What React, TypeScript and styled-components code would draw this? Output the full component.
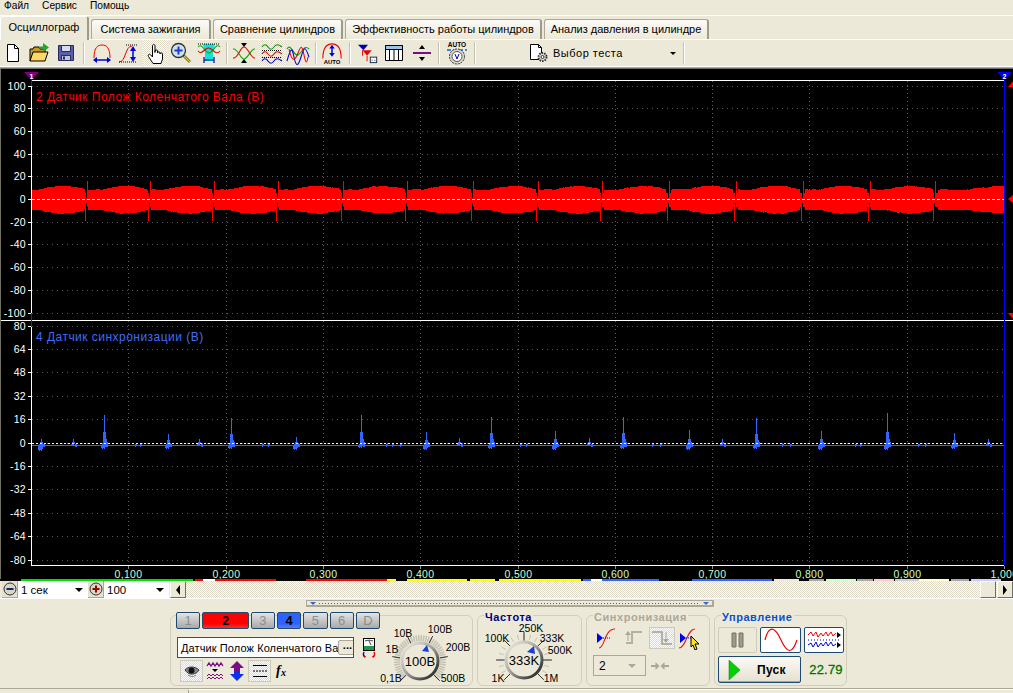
import React from "react";
import styled, { createGlobalStyle, css } from "styled-components";

const Global = createGlobalStyle`
  html, body { margin: 0; padding: 0; background: #ece9d8; overflow: hidden; }
  body { font-family: "Liberation Sans", Arial, sans-serif; font-size: 11px; color: #000; }
  svg { display: block; }
`;

const hatch = css`
  background-color: #fff;
  background-image: conic-gradient(#ddd9c6 25%, #fff 0 50%, #ddd9c6 0 75%, #fff 0);
  background-size: 2px 2px;
`;

const Page = styled.div`
  width: 1013px; height: 693px; display: flex; flex-direction: column; overflow: hidden; background: #ece9d8;
`;
const MenuBar = styled.div`
  height: 15px; display: flex; padding-left: 4px; gap: 13px; line-height: 12px; font-size: 10.2px;
`;
const TabBar = styled.div`
  height: 25px; box-sizing: border-box; border-top: 1px solid #fff; display: flex; align-items: flex-end; gap: 2px;
  position: relative; box-shadow: inset 0 -1px 0 #fff;
`;
const Tab = styled.div<{ $active?: boolean; $w: number }>`
  width: ${p => p.$w}px; box-sizing: border-box; text-align: center; font-size: 11px;
  border: 1px solid #aca899; border-bottom: none; border-radius: 3px 3px 0 0; white-space: nowrap;
  background: linear-gradient(#fbfaf6, #ece9d8);
  border-right: 2px solid #9d9a89;
  height: ${p => (p.$active ? 24 : 20)}px; line-height: ${p => (p.$active ? 21 : 18)}px;
  margin-bottom: ${p => (p.$active ? 0 : 1)}px;
  ${p => p.$active && css`background: #ece9d8; border-left: 1px solid #fff; border-top: 1px solid #fff;`}
`;
const Toolbar = styled.div`
  height: 26px; display: flex; align-items: stretch;
`;
const ToolSlot = styled.div<{ $w: number; $pressed?: boolean }>`
  width: ${p => p.$w}px; display: flex; align-items: center; justify-content: center; flex: none;
  ${p => p.$pressed && css`${hatch}; margin: 0 0 0 1px; width: ${p.$w - 1}px;`}
`;
const ToolSep = styled.div<{ $w: number }>`
  width: ${p => p.$w}px; flex: none; position: relative; display: flex; justify-content: center; align-items: center;
  &::after { content: ""; width: 2px; height: 22px; background: linear-gradient(90deg, #c5c2b2 50%, #fff 50%); }
`;
const TestPicker = styled.div`
  margin-left: 50px; width: 151px; display: flex; align-items: center; gap: 4px; letter-spacing: 0.5px; flex: none;
`;
const TestLabel = styled.span`flex: 1;`;
const Caret = styled.span<{ $color?: string; $size?: number }>`
  width: 0; height: 0; display: inline-block; flex: none;
  border-left: ${p => p.$size ?? 3}px solid transparent; border-right: ${p => p.$size ?? 3}px solid transparent;
  border-top: ${p => p.$size ?? 3}px solid ${p => p.$color ?? "#000"};
`;
const TestCaret = styled(Caret)`margin-right: 4px;`;
const ToolRule = styled.div`
  height: 3px; background: linear-gradient(#ffffff 0 1px, #aca899 1px 2px, #716f64 2px);
`;
const Scope = styled.div`
  height: 511px; background: #000; border-left: 1px solid #716f64; box-sizing: border-box;
`;
const Strip = styled.div`
  height: 2px; display: flex; background: #000; padding-left: 21px; margin-top: -1px; position: relative;
`;
const Seg = styled.div<{ $w: number; $c: string }>`
  width: ${p => p.$w}px; background: ${p => p.$c}; flex: none;
`;
const RangeRow = styled.div`
  height: 17px; display: flex; align-items: stretch; padding-left: 2px; box-sizing: border-box;
`;
const RoundBtn = styled.div`
  width: 15px; flex: none; background: #e4e1d0; border-right: 1px solid #aca899; border-bottom: 1px solid #aca899;
  display: flex; align-items: center; justify-content: center;
`;
const RangeSelect = styled.div<{ $w: number }>`
  width: ${p => p.$w}px; flex: none; background: #fff; display: flex; align-items: center; padding: 0 5px 0 3px;
  box-sizing: border-box; justify-content: space-between; font-size: 11.5px;
`;
const ScrollTrack = styled.div`
  flex: 1; ${hatch}; display: flex; justify-content: flex-end; margin-right: 0;
`;
const ScrollBtn = styled.div<{ $right?: boolean; $plain?: boolean }>`
  width: 16px; flex: none; background: #ece9d8; box-sizing: border-box;
  border-top: 1px solid #fff; border-left: 1px solid #fff; border-right: 1px solid #716f64; border-bottom: 1px solid #716f64;
  display: flex; align-items: center; justify-content: center;
  ${p => !p.$plain && css`
    &::before { content: ""; width: 0; height: 0; border-top: 5px solid transparent; border-bottom: 5px solid transparent;
      ${p.$right ? "border-left: 4px solid #000;" : "border-right: 4px solid #000;"} }
  `}
`;
const ScrollLeft = styled(ScrollBtn)`margin-left: 1px;`;
const ScrollThumb = styled(ScrollBtn)`margin-right: 1px;`;
const BottomArea = styled.div`
  flex: 1; display: flex; flex-direction: column; border-top: 1px solid #fff;
`;
const Splitter = styled.div`
  margin: 1px 0 8px 306px; width: 408px; height: 7px; box-sizing: border-box; border: 1px solid #aca899; border-bottom-width: 2px;
  border-right-width: 2px; position: relative; display: flex; align-items: center; justify-content: space-between; padding: 0 3px;
`;
const SplitDots = styled.div`
  flex: 1; margin: 0 3px; height: 1px;
  background-image: repeating-linear-gradient(90deg, #3a62c8 0 1px, transparent 1px 3px);
`;
const PanelRow = styled.div`
  display: flex; gap: 4px; padding-left: 170px; height: 71px;
`;
const Panel = styled.div<{ $w: number }>`
  width: ${p => p.$w}px; flex: none; box-sizing: border-box; border: 1px solid #d2cebc; border-radius: 6px; position: relative;
  display: flex; height: 71px;
`;
const PanelTitle = styled.div<{ $c: string }>`
  position: absolute; left: 6px; top: -4px; color: ${p => p.$c}; font-weight: 700; font-size: 11px; letter-spacing: 0.55px;
  background: #ece9d8; padding: 0 1px; line-height: 11px;
`;
const ChannelColumn = styled.div`
  width: 204px; flex: none; margin: -4px 0 0 5px; display: flex; flex-direction: column;
`;
const ChannelButtons = styled.div`
  display: flex; gap: 2px; height: 17px;
`;
const ChannelBtn = styled.div<{ $w?: number; $c?: string }>`
  width: ${p => p.$w ?? 25}px; box-sizing: border-box; border: 1px solid #1f4a70; border-radius: 2px; text-align: center;
  font-size: 13px; line-height: 15px;
  color: ${p => (p.$c ? "#000" : "#8e8e8e")};
  background: ${p => p.$c ? `linear-gradient(${p.$c} 0 70%, ${p.$c}cc)` : "linear-gradient(#e4e4e4, #a9a9a9)"};
`;
const ChannelBtnStrong = styled(ChannelBtn)`font-weight: 700;`;
const NameRow = styled.div`
  margin-top: 8px; height: 21px; display: flex; align-items: center; gap: 6px; margin-left: 1px;
`;
const NameBox = styled.div`
  width: 177px; height: 21px; box-sizing: border-box; border: 1px solid #ff0000; background: #fff; display: flex; align-items: center;
  overflow: hidden; padding-left: 3px; position: relative; font-size: 11px; letter-spacing: 0.1px;
`;
const NameText = styled.span`white-space: nowrap; flex: 1;`;
const DotsBtn = styled.div`
  width: 18px; height: 15px; flex: none; margin-right: 1px; background: #ece9d8; border: 1px solid #aca899; border-radius: 2px;
  text-align: center; line-height: 9px; font-weight: 700; box-sizing: border-box;
`;
const IconRow = styled.div`
  margin-top: 1px; margin-left: 4px; display: flex; align-items: center; height: 24px; gap: 1px;
`;
const IconSlot = styled.div<{ $w: number; $pressed?: boolean }>`
  width: ${p => p.$w}px; height: 22px; display: flex; align-items: center; justify-content: center; flex: none; box-sizing: border-box;
  ${p => p.$pressed && css`${hatch}; border: 1px solid #cdcabb;`}
`;
const KnobWrap = styled.div`margin: 6px 0 0 0; flex: none;`;
const FreqWrap = styled.div`margin: 4px 0 0 0; flex: none;`;
const KnobText = styled.text<{ $s?: number }>`
  font-family: "Liberation Sans", Arial, sans-serif; font-size: ${p => p.$s ?? 10.5}px; fill: #000; text-anchor: middle;
`;
const SyncBody = styled.div`
  padding: 11px 0 0 6px; display: flex; flex-direction: column;
`;
const SyncIcons = styled.div`display: flex; gap: 2px; height: 22px;`;
const SyncControls = styled.div`
  margin-top: 6px; display: flex; align-items: center; gap: 4px;
`;
const SyncSelect = styled.div`
  width: 53px; height: 21px; box-sizing: border-box; border: 1px solid #aca899; display: flex; align-items: center; justify-content: space-between;
  padding: 0 9px 0 5px; font-size: 12px;
`;
const ControlBody = styled.div`
  padding: 11px 0 0 3px; display: grid; grid-template-columns: 39px 41px 40px; grid-template-rows: 26px 27px; column-gap: 3px; row-gap: 3px;
`;
const CtlBtn = styled.div<{ $flat?: boolean }>`
  box-sizing: border-box; border-radius: 2px; display: flex; align-items: center; justify-content: center;
  background: ${p => (p.$flat ? "#ece9d8" : "#fff")};
  border: 1px solid ${p => (p.$flat ? "#cfcbb8" : "#1f4a70")};
`;
const StartBtn = styled.div`
  grid-column: 1 / span 2; box-sizing: border-box; border: 1px solid #1f4a70; border-radius: 2px; display: flex; align-items: center;
  padding-left: 9px; background: linear-gradient(#fbfaf6, #e4e1d0); box-shadow: inset 0 -1px 0 #aca899;
`;
const StartLabel = styled.span`
  font-weight: 700; font-size: 12px; margin-left: 15px; letter-spacing: 0.3px;
`;
const Timer = styled.div`
  color: #007400; font-size: 13px; letter-spacing: 0.2px; display: flex; align-items: center; justify-content: center; padding-left: 4px;
  -webkit-text-stroke: 0.3px #007400;
`;
const StatusBar = styled.div`
  margin-top: 2px; flex: 1; border-top: 1px solid #aca899; display: flex; padding-left: 188px;
`;
const StatusCell = styled.div`
  flex: 1; border-left: 1px solid #aca899; border-top: 1px solid #fff;
`;

/* ---------- icons ---------- */
const I = ({ children, s = 24, w, h }: { children: React.ReactNode; s?: number; w?: number; h?: number }) => (
  <svg width={w ?? s} height={h ?? s} viewBox={`0 0 ${w ?? s} ${h ?? s}`} fill="none">{children}</svg>
);
const NewDoc = () => <I><path d="M6.5 3.5h7l4 4v13h-11z" fill="#fff" stroke="#000" /><path d="M13.5 3.5v4h4" stroke="#000" /></I>;
const OpenDoc = () => <I><path d="M3 20V8h3l1-2h5l1 2h5v3" fill="#c89a2c" stroke="#000" /><path d="M3 20l3-9h15l-3 9z" fill="#ffd766" stroke="#000" /><path d="M16 2l6 4.5-6 4.5z" fill="#1fa829" /><path d="M12 6.5h4" stroke="#1fa829" strokeWidth="2" /></I>;
const SaveDoc = () => <I><path d="M4.5 4.5h15v15h-15z" fill="#5a5fa8" stroke="#262a66" /><path d="M7.5 4.5h9v6h-9z" fill="#d9dcf0" stroke="#262a66" /><path d="M7.5 14.5h9v5h-9z" fill="#c3c5d0" stroke="#262a66" /><path d="M9 15.5h2v3H9z" fill="#262a66" /></I>;
const ArcArrow = () => <I><path d="M4 17C4 6 8 4 12 4s8 2 8 13" stroke="#e00" /><path d="M5 19h14" stroke="#00d" strokeWidth="1.5" /><path d="M3 19l4-3v6zM21 19l-4-3v6z" fill="#00d" /></I>;
const SArrow = () => <I><path d="M2 21C9 21 8 5 15 5" stroke="#e00" /><path d="M9 4h12M2 21h18" stroke="#000" strokeDasharray="1 1" /><path d="M16 7v12" stroke="#00d" strokeWidth="1.5" /><path d="M16 5l3 5h-6zM16 21l3-5h-6z" fill="#00d" /></I>;
const Hand = () => <I><path d="M9 22.5L4.5 15.5C3.5 13.5 5.5 12.5 6.8 14L8.5 16V5C8.5 3 11 3 11 5V11.5V10C11 8.5 13.5 8.5 13.5 10V12C13.5 10.5 16 10.5 16 12V13C16 11.5 18.5 11.5 18.5 13V18L17 22.5Z" fill="#fff" stroke="#000" strokeLinejoin="round" /></I>;
const Zoom = () => <I><path d="M14 14l7 7" stroke="#8a7a2a" strokeWidth="3" /><path d="M14 14l7 7" stroke="#e0c860" /><circle cx="9.5" cy="9.5" r="7" fill="#cfe0f0" stroke="#333" strokeWidth="1.3" /><path d="M5.5 9.5h8M9.5 5.5v8" stroke="#1a3fd0" strokeWidth="2" /></I>;
const CyanFit = () => <I><path d="M6 3h12l-2 8v9H8v-9z" fill="#15e0d8" /><path d="M1 6c4-5 7 6 11 6s7-11 11-6" stroke="#0a0" strokeWidth="1.1" /><path d="M1 10c4 5 7-4 11-3s7 8 11 3" stroke="#d00" strokeWidth="1.1" /><path d="M1 3h22" stroke="#000" strokeDasharray="1 1" /><path d="M7 19h10M7 16v6M17 16v6" stroke="#00a" strokeWidth="1.2" /></I>;
const CrossWave = () => <I><path d="M1 8c5-1 7 10 11 10s7-11 11-10" stroke="#0a0" strokeWidth="1.1" /><path d="M1 17c5 1 7-11 11-11s7 12 11 11" stroke="#d00" strokeWidth="1.1" /><path d="M12 6l-3-4h6zM12 18l-3 4h6z" fill="#000" /></I>;
const StackWave = () => <I><path d="M2 6c2-3 4-3 6 0s4 3 6 0 4-3 8 0" stroke="#090" strokeWidth="1.1" /><path d="M2 13c2-3 4-3 6 0s4 3 6 0 4-3 8 0" stroke="#d00" strokeWidth="1.1" /><path d="M2 20c2-3 4-3 6 0s4 3 6 0 4-3 8 0" stroke="#00d" strokeWidth="1.1" /><path d="M2 9.500h20M2 16.500h20" stroke="#000" strokeDasharray="1 1" /></I>;
const OverWave = () => <I><path d="M1 8c4-7 7 8 11 6s6-11 11-6" stroke="#0a0" strokeWidth="1.1" /><path d="M1 20c4-14 5-14 7-4s4 10 7 0 4-12 8 0" stroke="#00d" strokeWidth="1.1" /><path d="M3 8c3 14 6 12 9 4s4-8 6 2 3 8 4 2" stroke="#e00" strokeWidth="1.1" /></I>;
const AutoAmp = () => <I><path d="M2 18C2 5 7 2 12 2s10 3 10 16" stroke="#e00" strokeWidth="1.2" /><path d="M12 5v9" stroke="#00d" strokeWidth="1.6" /><path d="M12 3l3 4H9zM12 16l3-4H9z" fill="#00d" /><text x="12" y="23.500" textAnchor="middle" fontSize="6.500" fontWeight="700" fontFamily="Liberation Sans" fill="#000">AUTO</text></I>;
const FilterMarks = () => <I><path d="M1 3h11l-5 6z" fill="#00a" /><path d="M6 9h10l-5 6z" fill="#e00" /><path d="M6 9v6M11 15v6" stroke="#e00" /><rect x="14.500" y="16.500" width="7" height="6" fill="#fff" stroke="#124" /><path d="M16 20h1M19 20h1" stroke="#124" /></I>;
const TableIcon = () => <I><path d="M3.500 4.500h17v15h-17z" fill="#fff" stroke="#000" /><path d="M3.500 4.500h17v4h-17z" fill="#9cc3e8" stroke="#000" /><path d="M7.500 8.500v11M12 8.500v11M16.500 8.500v11" stroke="#000" /></I>;
const SplitIcon = () => <I><path d="M3 12h18" stroke="#7a0c86" strokeWidth="2" /><path d="M12 4l-3 4h6zM12 20l-3-4h6z" fill="#000" /></I>;
const AutoVolt = () => <I><text x="12" y="6" textAnchor="middle" fontSize="6.500" fontWeight="700" fontFamily="Liberation Sans" fill="#000">AUTO</text><path d="M2 9h20" stroke="#06d" strokeWidth="1.4" strokeDasharray="4 2" /><circle cx="12" cy="15.500" r="7.500" fill="#d9d7cb" stroke="#333" strokeDasharray="2 1" /><circle cx="12" cy="15.500" r="5" fill="#fff" stroke="#555" /><path d="M10 13l2 5 2-5" stroke="#00a" /></I>;
const DocGear = () => <I w={20} h={20} ><path d="M1.500 1.500h8l3 3v12h-11z" fill="#fff" stroke="#000" /><path d="M9.500 1.500v3h3" stroke="#000" /><circle cx="13.500" cy="14" r="4" fill="#ddd" stroke="#333" strokeWidth="2" strokeDasharray="1.500 1" /><circle cx="13.500" cy="14" r="1.500" fill="#fff" stroke="#333" /></I>;
const MinusRound = () => <I s={14}><circle cx="7" cy="7" r="6" fill="#d9d6c5" stroke="#333" /><path d="M3.500 7h7" stroke="#102a70" strokeWidth="2" /></I>;
const PlusRound = () => <I s={14}><circle cx="7" cy="7" r="6" fill="#d9d6c5" stroke="#333" /><path d="M3.500 7h7M7 3.500v7" stroke="#900" strokeWidth="2" /></I>;
const Eye = () => <I s={16}><path d="M1 7C4 3 11 3 15 7c-3 5-10 6-14 0z" fill="#888" stroke="#333" /><circle cx="7.500" cy="7.500" r="3" fill="#111" /><path d="M4 12c3 2 6 2 8 0" stroke="#777" /></I>;
const WaveMenu = () => <I w={18} h={20}><path d="M1 5l2-3 2 3 2-3 2 3 2-3 2 3 2-3 2 3" stroke="#7a0c86" strokeWidth="1.3" /><path d="M1 15l2-2 2 2 2-2 2 2 2-2 2 2 2-2 2 2M1 18l2-2 2 2 2-2 2 2 2-2 2 2 2-2 2 2" stroke="#7a0c86" /><path d="M6 8h6l-3 3z" fill="#000" /></I>;
const UpDown = () => <I w={16} h={20}><path d="M8 0l7 7h-4v3H5V7H1z" fill="#7a0c86" /><path d="M8 20l7-7h-4v-3H5v3H1z" fill="#0a2ff0" /></I>;
const Lines = () => <I w={16} h={16}><path d="M1 2.500h14M1 13.500h14" stroke="#000" /><path d="M1 8h14" stroke="#000" strokeDasharray="2 1" /></I>;
const Fx = () => <I w={15} h={14}><text x="1" y="11" fontFamily="Liberation Serif" fontStyle="italic" fontWeight="700" fontSize="14" fill="#000">f</text><text x="6" y="12" fontFamily="Liberation Serif" fontStyle="italic" fontWeight="700" fontSize="10" fill="#000">x</text></I>;
const ProbeIcon = () => <I w={18} h={20}><rect x="3.500" y="0.500" width="11" height="12" fill="#fff" stroke="#000" /><path d="M5 3c3-1 5-1 8 0M9 3l2 4" stroke="#444" /><rect x="4" y="8" width="10" height="4" fill="#1a9a50" /><path d="M4 14a4 4 0 0 0 1 5" stroke="#00c" strokeWidth="1.400" /><path d="M14 14a4 4 0 0 1-1 5" stroke="#e00" strokeWidth="1.400" /><path d="M5 20l-2-2h3zM13 20l2-2h-3z" fill="#e00" /></I>;
const SyncRise = () => <I><path d="M5 22C11 22 10 3 21 3" stroke="#d22" strokeWidth="1.200" /><path d="M3 12h14" stroke="#00e" strokeDasharray="1 1" /><path d="M3 7l6 5-6 5z" fill="#00e" /></I>;
const EdgeUp = () => <I><path d="M4 17h6V6h10" stroke="#b4b1a2" strokeWidth="2" /><path d="M6 15V7" stroke="#aca899" /><path d="M6 5l-3 4h6z" fill="#aca899" /></I>;
const EdgeDown = () => <I><path d="M2 6h10v12h10" stroke="#b4b1a2" strokeWidth="2" /><path d="M16 6v8" stroke="#aca899" /><path d="M16 17l-3-4h6z" fill="#aca899" /></I>;
const SyncCursor = () => <I><path d="M1 22C8 22 9 3 17 3" stroke="#d22" strokeWidth="1.200" /><path d="M2 12h13" stroke="#00e" strokeDasharray="1 1" /><path d="M2 7l6 5-6 5z" fill="#00e" /><path d="M13 10l8 8-4 0 2 5-2 1-2-5-2 2z" fill="#ffe020" stroke="#000" /></I>;
const Converge = () => <I w={20} h={10}><path d="M1 5h6M19 5h-6" stroke="#aca899" strokeWidth="2" /><path d="M9.500 5l-4-4v8zM10.500 5l4-4v8z" fill="#aca899" /></I>;
const Pause = () => <I w={14} h={16}><path d="M1 1h4v14H1zM8 1h4v14H8z" fill="#9d9a8c" stroke="#77756a" /></I>;
const Sine = () => <I w={34} h={24}><path d="M1 12C5 -4 11 -1 17 12s11 15 16 0" stroke="#e00" strokeWidth="1.200" /></I>;
const TwoWaves = () => <I w={34} h={22}><path d="M1 6l3-3 2 4 3-4 2 5 3-4 2 3 3-4 2 4 3-4 2 4 3-3" stroke="#e00" /><path d="M1 16l3-2 2 4 3-5 2 5 3-4 2 3 3-4 2 4 3-4 2 4 3-2" stroke="#00d" /><path d="M1 11h32" stroke="#00d" strokeDasharray="1 2" /><path d="M34 6l-4-3v6zM34 16l-4-3v6z" fill="#000" /></I>;
const PlayTri = () => <I w={14} h={22}><path d="M1 1l11 10L1 21z" fill="#00d000" stroke="#008000" strokeWidth="0.500" /></I>;

/* ---------- data ---------- */
const rand = (seed: number) => { const v = Math.sin(seed * 127.1) * 43758.5453; return v - Math.floor(v); };
const redSpikes = [86.5, 149.5, 213.5, 277.5, 342.5, 406.5, 472.5, 537.5, 601.5, 668.5, 735.5, 802.5, 869.5, 934.5];
const Y0 = 199.5;

function redWave(): string {
  let d = "";
  const knots = [22, ...redSpikes, 1060];
  for (let x = 32; x < 1004; x++) {
    let i = 0;
    while (i < knots.length - 2 && x + 0.5 > knots[i + 1]) i++;
    const ph = (x + 0.5 - knots[i]) / (knots[i + 1] - knots[i]);
    const q = Math.floor(x / 4);
    const bulge = Math.max(0, Math.sin(Math.PI * (ph - 0.25) / 0.75));
    let a = 9.5 + 3.6 * bulge + rand(q) * 0.8;
    if (ph < 0.03 || ph > 0.97) a = 6.5;
    d += `M${x + 0.5} ${Y0 - a}V${Y0 + a + 0.5}`;
  }
  return d;
}
function redSpike(): string {
  return redSpikes.map(s => `M${s + 1} ${Y0 - 18.5}V${Y0}M${s - 1} ${Y0}V${Y0 + 21}`).join("");
}
function redNotch(): string {
  return redSpikes.map(s => `M${s} ${Y0 - 7}V${Y0 - 2}M${s} ${Y0 + 3}V${Y0 + 14}`).join("");
}
const blueSpikes: [number, number, number][] = [
  [41, 439, 451], [73, 439, 446], [104, 415, 449], [168, 434, 449], [199, 439, 446], [231, 418, 449], [296, 437, 450],
  [361, 415, 448], [426, 432, 450], [459, 438, 446], [491, 417, 449], [555, 431, 450], [589, 438, 446], [623, 417, 449],
  [689, 430, 450], [722, 439, 446], [756, 418, 449], [821, 431, 450], [887, 413, 450], [954, 433, 449], [988, 439, 446],
];
const blips = [135, 140, 262, 268, 386, 392, 400, 520, 526, 652, 660, 782, 790, 855, 860, 918, 925];
function blueWave(): string {
  let d = "M32 445.500H1004";
  for (const [x, t, b] of blueSpikes) {
    const h = 445 - t;
    d += `M${x + 0.5} ${t}V${b}`;
    d += `M${x - 0.5} ${445 - h * 0.42}V${b - 1}`;
    d += `M${x + 1.5} ${445 - h * 0.42}V${b - 2}`;
    d += `M${x + 2.5} ${445 - h * 0.2}V447`;
    d += `M${x + 3.5} ${445 - h * 0.1}V447M${x - 1.5} 444V${b}M${x - 2.5} 445V${b - 1}`;
  }
  for (const x of blips) d += `M${x + 0.5} 443.500V447M${x + 1.5} 444V446`;
  return d;
}
const topVals = [100, 80, 60, 40, 20, 0, -20, -40, -60, -80, -100];
const botVals = [80, 64, 48, 32, 16, 0, -16, -32, -48, -64, -80];
const topY = (v: number) => Math.floor(86 + (100 - v) * 1.135) + 0.5;
const botY = (v: number) => Math.floor(326 + (80 - v) * 1.4625) + 0.5;
const timeX = [1, 2, 3, 4, 5, 6, 7, 8, 9, 10].map(i => ({ label: i === 10 ? "1,000" : `0,${i}00`, x: Math.round(31 + i * 97.3) + 0.5 }));

const AxisText = styled.text<{ $c?: string }>`
  font-family: "Liberation Sans", Arial, sans-serif; font-size: 10.500px; fill: ${p => p.$c ?? "#fff"}; letter-spacing: 0.3px;
`;
const ChannelTitle = styled.text<{ $c: string }>`
  font-family: "Liberation Sans", Arial, sans-serif; font-size: 12px; fill: ${p => p.$c}; letter-spacing: 0.47px;
`;

const ScopeChart = () => (
  <svg width={1012} height={511} viewBox="1 69 1012 511" shapeRendering="crispEdges">
    {[...topVals.map(topY), ...botVals.map(botY)].map((y, i) => (
      <path key={i} d={`M32 ${y}H1004`} stroke="#5a5a5a" strokeDasharray="1 4" />
    ))}
    {timeX.map(t => <path key={t.x} d={`M${t.x} 81V565`} stroke="#5a5a5a" strokeDasharray="1 3" />)}

    <path d={redWave()} stroke="#ff0000" />
    <path d={redSpike()} stroke="#ff0000" />
    <path d={redNotch()} stroke="#000" />
    <path d={`M32 ${Y0}H1004`} stroke="#fff" strokeDasharray="3 2" />

    <path d={blueWave()} stroke="#3366ff" />
    <path d="M32 443.500H1004" stroke="#fff" strokeDasharray="2 2" />

    <path d="M31 80.500H1004M1 320.500H1013M31 565.500H1004" stroke="#fff" />
    <path d="M31.500 86V313M31.500 327V565" stroke="#fff" />
    <path d="M31.500 76V86M31.500 313V327" stroke="#800080" />
    <path d="M1004.500 76V565" stroke="#0000ff" />

    {topVals.map(v => <path key={v} d={`M28 ${topY(v)}H31`} stroke="#fff" />)}
    {botVals.map(v => <path key={v} d={`M28 ${botY(v)}H31`} stroke="#fff" />)}
    {timeX.map(t => <path key={t.x} d={`M${t.x} 566V569`} stroke="#888" />)}

    <g shapeRendering="geometricPrecision">
      {topVals.map(v => <AxisText key={v} x={26} y={topY(v) + 3.5} textAnchor="end">{v}</AxisText>)}
      {botVals.map(v => <AxisText key={v} x={26} y={botY(v) + 3.5} textAnchor="end">{v}</AxisText>)}
      {timeX.map(t => <AxisText key={t.x} x={t.x} y={578} textAnchor="middle" $c="#ccffcc">{t.label}</AxisText>)}
      <ChannelTitle x={36} y={101} $c="#ff0000">2 Датчик Полож Коленчатого Вала (В)</ChannelTitle>
      <ChannelTitle x={36} y={341} $c="#3f6df5">4 Датчик синхронизации (В)</ChannelTitle>
      <path d="M24 72H39L31.500 80Z" fill="#800080" />
      <AxisText x={31.500} y={79} textAnchor="middle" style={{ fontSize: 7, fontWeight: 700 }}>1</AxisText>
      <path d="M997 72H1012L1004.500 80Z" fill="#0000ff" />
      <AxisText x={1004.500} y={79} textAnchor="middle" style={{ fontSize: 7, fontWeight: 700 }}>2</AxisText>
      <path d="M1008 87L1013 81V87Z" fill="#ff0000" />
      <path d="M1008 199L1013 195V203Z" fill="#ff0000" />
      <path d="M1008 313H1013V319Z" fill="#ff0000" />
    </g>
  </svg>
);

const spokes = (cx: number, cy: number, r1: number, r2: number, n: number) => {
  let d = "";
  for (let i = 0; i < n; i++) {
    const a = ((135 + (270 * i) / (n - 1)) * Math.PI) / 180;
    d += `M${(cx + r1 * Math.cos(a)).toFixed(1)} ${(cy + r1 * Math.sin(a)).toFixed(1)}L${(cx + r2 * Math.cos(a)).toFixed(1)} ${(cy + r2 * Math.sin(a)).toFixed(1)}`;
  }
  return d;
};

const KnobRing = ({ id, cx, cy, r, text }: { id: string; cx: number; cy: number; r: number; text: string }) => (
  <>
    <defs>
      <linearGradient id={id} x1="0" y1="0" x2="1" y2="1">
        <stop offset="0" stopColor="#f4f2e8" />
        <stop offset="0.45" stopColor="#a8a8a4" />
        <stop offset="1" stopColor="#111" />
      </linearGradient>
    </defs>
    <circle cx={cx} cy={cy} r={r} stroke={`url(#${id})`} strokeWidth={3} fill="#ece9d8" />
    <KnobText x={cx} y={cy + 5} $s={13}>{text}</KnobText>
  </>
);

const VoltKnob = () => (
  <svg width={90} height={65} viewBox="380 622 90 65" fill="none">
    <path d={spokes(420, 661, 20, 26, 46)} stroke="#c4c1b0" strokeWidth="1.500" />
    <path d={spokes(420, 661, 20, 28, 6)} stroke="#333" />
    <KnobRing id="kv" cx={420} cy={661} r={18} text="100В" />
    <path d="M427 645l2 7-7-1z" fill="#1a3fe0" />
    <KnobText x={391} y={682}>0,1В</KnobText>
    <KnobText x={392} y={653}>1В</KnobText>
    <KnobText x={403} y={637}>10В</KnobText>
    <KnobText x={440} y={633}>100В</KnobText>
    <KnobText x={458} y={651}>200В</KnobText>
    <KnobText x={453} y={682}>500В</KnobText>
  </svg>
);
const FreqKnob = () => (
  <svg width={102} height={66} viewBox="479 620 102 66" fill="none">
    <path d={spokes(525, 660, 21, 26, 19)} stroke="#c4c1b0" />
    <path d={spokes(525, 660, 19, 28, 7)} stroke="#333" />
    <KnobRing id="kf" cx={525} cy={660} r={18} text="333K" />
    <path d="M535 646l1 8-8-2z" fill="#1a3fe0" />
    <KnobText x={499} y={682}>1K</KnobText>
    <KnobText x={498} y={642}>100K</KnobText>
    <KnobText x={532} y={632}>250K</KnobText>
    <KnobText x={553} y={642}>333K</KnobText>
    <KnobText x={561} y={654}>500K</KnobText>
    <KnobText x={552} y={682}>1M</KnobText>
  </svg>
);

const tools: ({ w: number; icon?: React.ReactNode; pressed?: boolean } )[] = [
  { w: 25, icon: <NewDoc /> }, { w: 27, icon: <OpenDoc /> }, { w: 27, icon: <SaveDoc /> }, { w: 10 },
  { w: 26, icon: <ArcArrow /> }, { w: 27, icon: <SArrow /> }, { w: 26, icon: <Hand />, pressed: true }, { w: 26, icon: <Zoom /> }, { w: 30, icon: <CyanFit /> }, { w: 6 },
  { w: 28, icon: <CrossWave /> }, { w: 27, icon: <StackWave />, pressed: true }, { w: 26, icon: <OverWave /> }, { w: 10 },
  { w: 22, icon: <AutoAmp /> }, { w: 14 },
  { w: 22, icon: <FilterMarks /> }, { w: 30, icon: <TableIcon /> }, { w: 26, icon: <SplitIcon /> }, { w: 8 },
  { w: 28, icon: <AutoVolt /> }, { w: 8 },
];
const stripSegs: [number, string][] = [
  [172, "#00e000"], [2, "#000"], [8, "#ff0000"], [12, "#fff"], [61, "#ff0000"], [30, "#000"], [81, "#ff0000"], [9, "#ffff00"], [11, "#000"],
  [60, "#ffff00"], [3, "#000"], [25, "#ffff00"], [4, "#000"], [82, "#ffff00"], [2, "#000"], [8, "#3366ff"], [11, "#fff"], [57, "#3366ff"], [33, "#000"],
  [80, "#3366ff"], [2, "#000"], [25, "#ece9d8"], [10, "#000"], [15, "#aaa"], [2, "#000"], [30, "#ccffcc"], [1, "#000"], [16, "#aaa"], [1, "#000"], [20, "#ffcccc"], [1, "#000"],
  [24, "#ccc"], [30, "#ffffcc"], [2, "#000"], [18, "#aaa"], [2, "#000"], [30, "#ccccff"],
];

export default function App() {
  return (
    <Page>
      <Global />
      <MenuBar><span>Файл</span><span>Сервис</span><span>Помощь</span></MenuBar>
      <TabBar>
        <Tab $active $w={89}>Осциллограф</Tab>
        <Tab $w={120}>Система зажигания</Tab>
        <Tab $w={130}>Сравнение цилиндров</Tab>
        <Tab $w={197}>Эффективность работы цилиндров</Tab>
        <Tab $w={165}>Анализ давления в цилиндре</Tab>
      </TabBar>
      <Toolbar>
        {tools.map((t, i) =>
          t.icon ? <ToolSlot key={i} $w={t.w} $pressed={t.pressed}>{t.icon}</ToolSlot> : <ToolSep key={i} $w={t.w} />
        )}
        <TestPicker><DocGear /><TestLabel>Выбор теста</TestLabel><TestCaret /></TestPicker>
        <ToolSep $w={8} />
      </Toolbar>
      <ToolRule />
      <Scope><ScopeChart /></Scope>
      <Strip>{stripSegs.map(([w, c], i) => <Seg key={i} $w={w} $c={c} />)}</Strip>
      <RangeRow>
        <RoundBtn><MinusRound /></RoundBtn>
        <RangeSelect $w={70}><span>1 сек</span><Caret $size={4} /></RangeSelect>
        <RoundBtn><PlusRound /></RoundBtn>
        <RangeSelect $w={65}><span>100</span><Caret $size={4} /></RangeSelect>
        <ScrollLeft />
        <ScrollTrack><ScrollThumb $plain /></ScrollTrack>
        <ScrollBtn $right />
      </RangeRow>
      <BottomArea>
        <Splitter>
          <Caret $color="#3a62c8" $size={3} />
          <SplitDots />
          <Caret $color="#3a62c8" $size={3} />
        </Splitter>
        <PanelRow>
          <Panel $w={303}>
            <ChannelColumn>
              <ChannelButtons>
                <ChannelBtn>1</ChannelBtn>
                <ChannelBtnStrong $w={48} $c="#ff0000">2</ChannelBtnStrong>
                <ChannelBtn>3</ChannelBtn>
                <ChannelBtnStrong $c="#2e62ff">4</ChannelBtnStrong>
                <ChannelBtn>5</ChannelBtn>
                <ChannelBtn>6</ChannelBtn>
                <ChannelBtn>D</ChannelBtn>
              </ChannelButtons>
              <NameRow>
                <NameBox><NameText>Датчик Полож Коленчатого Ва</NameText><DotsBtn>...</DotsBtn></NameBox>
                <ProbeIcon />
              </NameRow>
              <IconRow>
                <IconSlot $w={23} $pressed><Eye /></IconSlot>
                <IconSlot $w={22}><WaveMenu /></IconSlot>
                <IconSlot $w={20}><UpDown /></IconSlot>
                <IconSlot $w={23} $pressed><Lines /></IconSlot>
                <IconSlot $w={20}><Fx /></IconSlot>
              </IconRow>
            </ChannelColumn>
            <KnobWrap><VoltKnob /></KnobWrap>
          </Panel>
          <Panel $w={105}>
            <PanelTitle $c="#000080">Частота</PanelTitle>
            <FreqWrap><FreqKnob /></FreqWrap>
          </Panel>
          <Panel $w={124}>
            <PanelTitle $c="#aca899">Синхронизация</PanelTitle>
            <SyncBody>
              <SyncIcons>
                <IconSlot $w={26}><SyncRise /></IconSlot>
                <IconSlot $w={26}><EdgeUp /></IconSlot>
                <IconSlot $w={26} $pressed><EdgeDown /></IconSlot>
                <IconSlot $w={26}><SyncCursor /></IconSlot>
              </SyncIcons>
              <SyncControls>
                <SyncSelect><span>2</span><Caret $color="#aca899" $size={4} /></SyncSelect>
                <Converge />
              </SyncControls>
            </SyncBody>
          </Panel>
          <Panel $w={133}>
            <PanelTitle $c="#0a50d0">Управление</PanelTitle>
            <ControlBody>
              <CtlBtn $flat><Pause /></CtlBtn>
              <CtlBtn><Sine /></CtlBtn>
              <CtlBtn><TwoWaves /></CtlBtn>
              <StartBtn><PlayTri /><StartLabel>Пуск</StartLabel></StartBtn>
              <Timer>22.79</Timer>
            </ControlBody>
          </Panel>
        </PanelRow>
        <StatusBar><StatusCell /></StatusBar>
      </BottomArea>
    </Page>
  );
}
